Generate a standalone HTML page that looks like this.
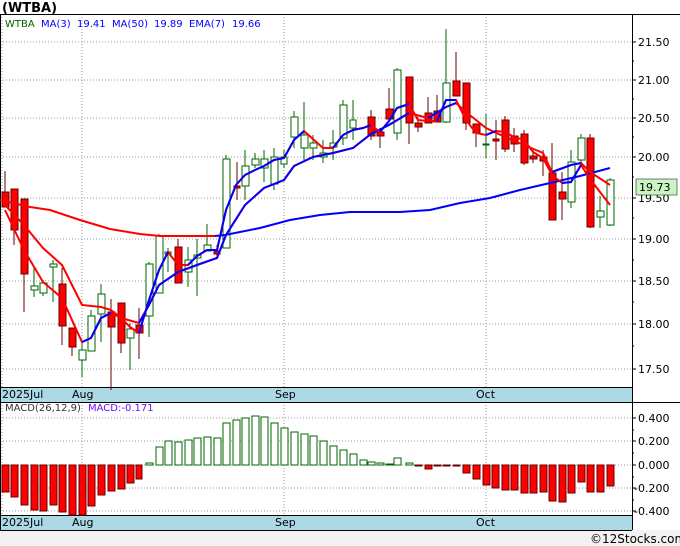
<!DOCTYPE html>
<html><head><meta charset="utf-8"><style>
body{margin:0;width:680px;height:546px;overflow:hidden;background:#fff;font-family:"Liberation Sans","DejaVu Sans",sans-serif}
svg{display:block}
</style></head><body>
<svg width="680" height="546" xmlns="http://www.w3.org/2000/svg" font-family="DejaVu Sans, Liberation Sans, sans-serif">
<rect x="0" y="530" width="680" height="16" fill="#f2f2f2"/>
<text x="2" y="12" font-size="13" font-weight="bold" fill="#000">(WTBA)</text>
<rect x="0" y="387" width="632" height="15" fill="#add8e6"/>
<rect x="0" y="515" width="632" height="15" fill="#add8e6"/>
<g stroke="#999" stroke-dasharray="1,2" stroke-width="1" fill="none">
<path d="M0 42H632M0 80H632M0 118H632M0 157H632M0 198H632M0 239H632M0 281H632M0 324H632M0 369H632"/>
<path d="M0 418H632M0 441H632M0 465H632M0 488H632M0 511H632"/>
<path d="M82 14V387M284 14V387M486 14V387M2 14V387M82 402V515M284 402V515M486 402V515M2 402V515"/>
</g>
<g stroke="#000" fill="none">
<path d="M0.5 14V530M0 14.5H680M0 387.5H632M0 402.5H680M0 515.5H632M0 530.5H632M632.5 14V530"/>
<path d="M632 42h4M632 80h4M632 118h4M632 157h4M632 198h4M632 239h4M632 281h4M632 324h4M632 369h4M632 61h2M632 99h2M632 137h2M632 177h2M632 218h2M632 260h2M632 302h2M632 346h2M632 418h4M632 441h4M632 465h4M632 488h4M632 511h4M632 430h2M632 453h2M632 477h2M632 500h2"/>
</g>
<g font-size="11" fill="#000">
<text x="638" y="46">21.50</text><text x="638" y="84">21.00</text><text x="638" y="122">20.50</text><text x="638" y="161">20.00</text><text x="638" y="202">19.50</text><text x="638" y="243">19.00</text><text x="638" y="285">18.50</text><text x="638" y="328">18.00</text><text x="638" y="373">17.50</text>
<text x="638" y="422">0.400</text><text x="638" y="445">0.200</text><text x="638" y="469">0.000</text><text x="634" y="492">-0.200</text><text x="634" y="515">-0.400</text>
<text x="2" y="398">2025Jul</text><text x="72" y="398">Aug</text><text x="275" y="398">Sep</text><text x="476" y="398">Oct</text>
<text x="2" y="526">2025Jul</text><text x="72" y="526">Aug</text><text x="275" y="526">Sep</text><text x="476" y="526">Oct</text>
<text x="590" y="543" font-size="12">©12Stocks.com</text>
</g>
<rect x="636" y="179" width="41" height="16" fill="#c8f5c0" stroke="#000" stroke-width="0.5"/>
<text x="639" y="191" font-size="11">19.73</text>
<g font-size="10">
<text x="5" y="27" fill="#006400">WTBA</text>
<text x="41" y="27" fill="#0000ff">MA(3)</text><text x="77" y="27" fill="#0000ff">19.41</text>
<text x="112" y="27" fill="#0000ff">MA(50)</text><text x="154" y="27" fill="#0000ff">19.89</text>
<text x="189" y="27" fill="#0000ff">EMA(7)</text><text x="232" y="27" fill="#0000ff">19.66</text>
<text x="5" y="411" fill="#333">MACD(26,12,9)</text><text x="88" y="411" fill="#6a0dff">MACD:-0.171</text>
</g>
<g stroke="#600" stroke-width="1">
<path d="M5 171V207M14 189V245M24 199V312M62 268V345M72 328V356M111 299V390M121 303V353M139 308V359M178 239V283M217 245V258M237 162V200M371 110V140M380 128V148M389 88V119M409 77V144M418 117V132M428 97V123M437 95V122M456 52V96M466 83V130M476 124V147M496 120V160M505 116V152M514 128V152M524 130V165M533 150V163M543 150V176M552 143V220M562 172V220M590 134V228"/>
</g>
<g fill="#f00" stroke="#600" stroke-width="1">
<rect x="2" y="192" width="7" height="15"/><rect x="11" y="189" width="7" height="41"/><rect x="21" y="199" width="7" height="75"/>
<rect x="59" y="284" width="7" height="42"/><rect x="69" y="328" width="7" height="19"/><rect x="108" y="312" width="7" height="15"/><rect x="118" y="303" width="7" height="40"/><rect x="136" y="325" width="7" height="8"/>
<rect x="175" y="247" width="7" height="36"/><rect x="214" y="251" width="6" height="3"/><rect x="234" y="186" width="6" height="2"/>
<rect x="368" y="117" width="7" height="19"/><rect x="377" y="132" width="7" height="4"/><rect x="386" y="109" width="7" height="10"/><rect x="406" y="77" width="7" height="46"/><rect x="415" y="123" width="7" height="4"/><rect x="425" y="113" width="7" height="10"/><rect x="434" y="111" width="7" height="11"/>
<rect x="453" y="81" width="7" height="15"/><rect x="463" y="83" width="7" height="40"/><rect x="473" y="124" width="7" height="9"/><rect x="493" y="139" width="6" height="2"/><rect x="502" y="120" width="7" height="29"/><rect x="511" y="136" width="7" height="8"/><rect x="521" y="134" width="7" height="29"/><rect x="530" y="156" width="7" height="3"/><rect x="540" y="157" width="7" height="4"/><rect x="549" y="173" width="7" height="47"/><rect x="559" y="192" width="7" height="7"/><rect x="587" y="138" width="7" height="89"/>
</g>
<g stroke="#006400" stroke-width="1">
<path d="M34 268V297M43 280V296M53 260V302M82 342V377M91 310V351M101 284V342M130 323V370M149 262V337M159 234V293M168 248V272M188 247V287M197 239V296M207 224V251M226 155V248M245 150V200M255 153V168M264 150V182M274 148V190M284 150V168M294 111V148M304 102V160M313 135V160M323 140V163M333 130V160M343 100V145M353 100V140M397 68V140M446 29V123M486 114V158M571 150V208M581 134V166M600 196V228M610 178V226"/>
</g>
<g fill="#fff" stroke="#006400" stroke-width="1">
<rect x="31" y="286" width="7" height="4"/><rect x="40" y="283" width="7" height="10"/><rect x="50" y="264" width="7" height="3"/><rect x="79" y="350" width="7" height="10"/><rect x="88" y="316" width="7" height="35"/><rect x="98" y="294" width="7" height="20"/><rect x="127" y="329" width="7" height="9"/>
<rect x="146" y="264" width="7" height="52"/><rect x="156" y="236" width="7" height="57"/><rect x="165" y="252" width="6" height="2"/><rect x="185" y="260" width="7" height="12"/><rect x="194" y="255" width="7" height="3"/><rect x="204" y="245" width="7" height="6"/>
<rect x="223" y="159" width="7" height="89"/><rect x="242" y="166" width="7" height="20"/><rect x="252" y="159" width="7" height="6"/><rect x="261" y="159" width="7" height="9"/><rect x="271" y="157" width="7" height="27"/><rect x="281" y="157" width="6" height="7"/>
<rect x="291" y="117" width="7" height="20"/><rect x="301" y="135" width="7" height="13"/><rect x="310" y="143" width="7" height="5"/><rect x="320" y="153" width="7" height="4"/><rect x="330" y="143" width="7" height="4"/><rect x="340" y="105" width="7" height="33"/><rect x="350" y="120" width="6" height="8"/>
<rect x="394" y="70" width="7" height="63"/><rect x="443" y="83" width="7" height="39"/><rect x="483" y="144" width="6" height="1"/>
<rect x="568" y="162" width="7" height="40"/><rect x="578" y="138" width="7" height="22"/><rect x="597" y="211" width="7" height="6"/><rect x="607" y="180" width="7" height="45"/>
</g>
<polyline fill="none" stroke="#f00" stroke-width="2" points="0,200 30,207 50,210 80,220 110,229 140,234 160,236 215,236"/>
<polyline fill="none" stroke="#00f" stroke-width="2" points="215,236 225,235 260,228 290,220 320,215 350,212 400,212 430,210 460,203 490,198 520,190 550,183 580,176 610,168"/>
<polyline fill="none" stroke="#f00" stroke-width="2" points="5,205 24,225 43,248 62,265 82,305 101,307 111,310 121,318 139,323 149,305 159,285 178,272 197,265 217,258 226,235 245,205 264,188 284,180 294,166 313,157 333,153 353,148 371,134 389,125 409,113 428,118 446,107 456,103 466,112 486,128 505,137 524,145 543,153 552,172 571,165 581,163 590,172 610,185"/>
<polyline fill="none" stroke="#00f" stroke-width="2" points="139,323 149,305 159,285 178,272 197,265 217,258 226,235 245,205 264,188 284,180 294,166 313,157 333,153 353,148 371,134 389,125 409,113"/>
<polyline fill="none" stroke="#00f" stroke-width="2" points="428,118 446,107 456,103"/>
<polyline fill="none" stroke="#00f" stroke-width="2" points="552,172 571,165 581,163"/>
<polyline fill="none" stroke="#f00" stroke-width="2" points="5,210 24,250 43,282 62,298 82,342 91,338 101,318 111,313 121,318 130,327 139,333 149,300 159,270 168,252 178,265 188,265 197,256 207,250 217,250 226,210 236,185 245,175 255,170 264,166 274,160 284,158 294,140 304,131 313,139 323,148 333,148 343,135 353,130 363,128 371,125 380,132 389,121 397,108 409,104 418,120 428,121 437,121 446,100 456,100 466,120 476,133 486,135 496,131 505,132 514,137 524,140 533,152 543,158 552,175 562,183 571,182 581,165 590,179 600,192 610,205"/>
<g fill="none" stroke="#00f" stroke-width="2">
<polyline points="82,342 91,338 101,318 111,313"/>
<polyline points="139,333 149,300 159,270 168,252"/>
<polyline points="188,265 197,256 207,250 217,250 226,210 236,185 245,175 255,170 264,166 274,160 284,158 294,140 304,131"/>
<polyline points="333,148 343,135 353,130 363,128 371,125"/>
<polyline points="380,132 389,121 397,108 409,104"/>
<polyline points="437,121 446,100 456,100"/>
<polyline points="486,135 496,131"/>
<polyline points="562,183 571,182 581,165"/>
</g>
<g fill="#f00" stroke="#600" stroke-width="1">
<rect x="2" y="465" width="7" height="27"/><rect x="11" y="465" width="7" height="32"/><rect x="21" y="465" width="7" height="40"/><rect x="31" y="465" width="7" height="45"/><rect x="40" y="465" width="7" height="46"/><rect x="50" y="465" width="7" height="40"/><rect x="59" y="465" width="7" height="47"/><rect x="69" y="465" width="7" height="50"/><rect x="79" y="465" width="7" height="50"/><rect x="88" y="465" width="7" height="41"/><rect x="98" y="465" width="7" height="30"/><rect x="108" y="465" width="7" height="26"/><rect x="118" y="465" width="7" height="24"/><rect x="127" y="465" width="7" height="18"/><rect x="136" y="465" width="6" height="14"/>
<rect x="415" y="465" width="7" height="1"/><rect x="425" y="465" width="7" height="4"/><rect x="434" y="465" width="7" height="1"/><rect x="443" y="465" width="7" height="1"/><rect x="453" y="465" width="7" height="1"/><rect x="463" y="465" width="7" height="8"/><rect x="473" y="465" width="7" height="14"/><rect x="483" y="465" width="7" height="20"/><rect x="492" y="465" width="7" height="23"/><rect x="502" y="465" width="7" height="25"/><rect x="511" y="465" width="7" height="25"/><rect x="521" y="465" width="7" height="28"/><rect x="530" y="465" width="7" height="28"/><rect x="540" y="465" width="7" height="27"/><rect x="549" y="465" width="7" height="36"/><rect x="559" y="465" width="7" height="37"/><rect x="568" y="465" width="7" height="28"/><rect x="578" y="465" width="7" height="17"/><rect x="587" y="465" width="7" height="27"/><rect x="597" y="465" width="7" height="27"/><rect x="607" y="465" width="7" height="21"/>
</g>
<g fill="#fff" stroke="#006400" stroke-width="1">
<rect x="146" y="463" width="7" height="2"/><rect x="156" y="447" width="7" height="18"/><rect x="165" y="441" width="7" height="24"/><rect x="175" y="442" width="7" height="23"/><rect x="185" y="440" width="7" height="25"/><rect x="194" y="438" width="7" height="27"/><rect x="204" y="437" width="7" height="28"/><rect x="214" y="438" width="7" height="27"/><rect x="223" y="423" width="7" height="42"/><rect x="233" y="420" width="7" height="45"/><rect x="242" y="418" width="7" height="47"/><rect x="252" y="416" width="7" height="49"/><rect x="261" y="417" width="7" height="48"/><rect x="271" y="423" width="7" height="42"/><rect x="281" y="428" width="7" height="37"/><rect x="291" y="432" width="7" height="33"/><rect x="301" y="434" width="7" height="31"/><rect x="310" y="436" width="7" height="29"/><rect x="320" y="441" width="7" height="24"/><rect x="330" y="446" width="7" height="19"/><rect x="340" y="450" width="7" height="15"/><rect x="350" y="454" width="7" height="11"/><rect x="360" y="460" width="7" height="5"/><rect x="368" y="462" width="7" height="3"/><rect x="377" y="463" width="7" height="2"/><rect x="386" y="464" width="7" height="1"/><rect x="394" y="458" width="7" height="7"/><rect x="406" y="463" width="7" height="2"/>
</g>
</svg>
</body></html>
